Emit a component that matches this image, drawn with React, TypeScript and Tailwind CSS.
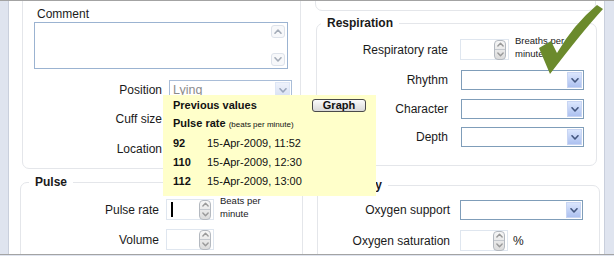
import React from "react";

function Chevron({ up, className }: { up?: boolean; className?: string }) {
  return (
    <svg width="8" height="5" viewBox="0 0 8 5" className={className}>
      <polyline
        points={up ? "1,4.2 4,1 7,4.2" : "1,0.8 4,4 7,0.8"}
        fill="none"
        stroke="currentColor"
        strokeWidth="1.6"
        strokeLinecap="round"
        strokeLinejoin="round"
      />
    </svg>
  );
}

function Select({ value, muted }: { value?: string; muted?: boolean }) {
  return (
    <div
      className={`flex h-[20px] w-[123px] items-center border bg-white ${
        muted ? "border-[#a9bdd8]" : "border-[#7f9db9]"
      }`}
    >
      <span className="flex-1 pl-[3px] text-[12.5px] leading-[18px] text-[#8c8c8c]">
        {value}
      </span>
      <span
        className={`mr-px flex h-[16px] w-[15px] items-center justify-center border ${
          muted
            ? "border-[#dde6f6] bg-linear-to-b from-[#eef2fb] to-[#d8e1f4] text-[#9aa6bd]"
            : "border-[#c8d5f3] bg-linear-to-b from-[#dbe6fd] to-[#adc1f0] text-[#44577f]"
        }`}
      >
        <Chevron />
      </span>
    </div>
  );
}

function Spinner() {
  return (
    <div className="flex h-[20px] w-[12px] flex-col overflow-hidden rounded-[4px] border border-[#b4b9c0] bg-linear-to-b from-[#f6f6f6] to-[#dcdcdc] text-[#9a9a9a]">
      <span className="flex flex-1 items-center justify-center border-b border-[#c4c8ce]">
        <Chevron up className="w-[7px]" />
      </span>
      <span className="flex flex-1 items-center justify-center">
        <Chevron className="w-[7px]" />
      </span>
    </div>
  );
}

function NumberBox({ cursor, width = 48 }: { cursor?: boolean; width?: number }) {
  return (
    <div
      className={`flex h-[21px] items-center border border-[#dfe6ef] bg-white pr-[2px] ${
        width === 48 ? "w-[48px]" : "w-[49px]"
      }`}
    >
      <span className="flex-1">
        {cursor && <span className="ml-[4px] block h-[15px] w-[2px] bg-black" />}
      </span>
      <Spinner />
    </div>
  );
}

function Legend({ children, left }: { children: React.ReactNode; left: string }) {
  return (
    <span
      className={`absolute -top-[8px] bg-white px-[6px] text-[12px] font-bold leading-[14px] text-[#1a1a1a] ${left}`}
    >
      {children}
    </span>
  );
}

function Row({
  label,
  labelWidth,
  gap,
  mt,
  children,
}: {
  label: string;
  labelWidth: string;
  gap: string;
  mt: string;
  children: React.ReactNode;
}) {
  return (
    <div className={`flex items-center ${mt}`}>
      <span className={`shrink-0 text-right text-[12px] leading-[14px] ${labelWidth} ${gap}`}>
        {label}
      </span>
      {children}
    </div>
  );
}

function Units({ first, second }: { first: string; second: string }) {
  return (
    <span className="ml-[6px] -mt-[5px] self-start text-[9.5px] leading-[13px] text-[#1a1a1a]">
      {first}
      <br />
      {second}
    </span>
  );
}

export default function App() {
  const history = [
    { value: "92", time: "15-Apr-2009, 11:52" },
    { value: "110", time: "15-Apr-2009, 12:30" },
    { value: "112", time: "15-Apr-2009, 13:00" },
  ];

  return (
    <div className="relative flex h-[256px] w-[614px] flex-col overflow-hidden bg-[#dfe4ef] font-['Liberation_Sans',Arial,sans-serif] text-[#1a1a1a]">
      <div className="h-px bg-[#a3a3a3]" />
      <div className="flex h-[253px]">
        <div className="w-[8px]" />
        <div className="flex w-[597px] overflow-hidden border-x border-[#c9cfdc] bg-white">
          {/* left column */}
          <div className="flex w-[299px] shrink-0 flex-col">
            <div className="-mt-[12px] ml-[13px] h-[180px] w-[279px] shrink-0 rounded-[7px] border border-[#e4e6ea] pt-[17px]">
              <div className="ml-[14px] text-[12px] leading-[14px]">Comment</div>
              <div className="ml-[11px] mt-[1px] flex h-[47px] w-[254px] justify-end border border-[#9bb3d1] bg-white p-[2px]">
                <div className="flex w-[14px] flex-col justify-between text-[#a4acb8]">
                  <span className="flex h-[13px] items-center justify-center rounded-[3px] border border-[#dde2ea] bg-[#f7f8fa]">
                    <Chevron up />
                  </span>
                  <span className="flex h-[13px] items-center justify-center rounded-[3px] border border-[#dde2ea] bg-[#f7f8fa]">
                    <Chevron />
                  </span>
                </div>
              </div>
              <Row label="Position" labelWidth="w-[139px]" gap="mr-[7px]" mt="mt-[11px]">
                <Select value="Lying" muted />
              </Row>
              <Row label="Cuff size" labelWidth="w-[139px]" gap="mr-[7px]" mt="mt-[9px]">
                <Select />
              </Row>
              <Row label="Location" labelWidth="w-[139px]" gap="mr-[7px]" mt="mt-[10px]">
                <Select />
              </Row>
            </div>

            <div className="relative ml-[11px] mt-[13px] h-[90px] w-[283px] shrink-0 rounded-[7px] border border-[#e4e6ea] pt-[16px]">
              <Legend left="left-[8px]">Pulse</Legend>
              <Row label="Pulse rate" labelWidth="w-[138px]" gap="mr-[7px]" mt="">
                <NumberBox cursor />
                <Units first="Beats per" second="minute" />
              </Row>
              <Row label="Volume" labelWidth="w-[138px]" gap="mr-[7px]" mt="mt-[9px]">
                <NumberBox />
              </Row>
            </div>
          </div>

          {/* right column */}
          <div className="flex flex-1 flex-col">
            <div className="-mt-[12px] ml-[7px] h-[22px] w-[281px] shrink-0 rounded-[7px] border border-[#e4e6ea]" />

            <div className="relative ml-[8px] mt-[12px] h-[143px] w-[281px] shrink-0 rounded-[7px] border border-[#e4e6ea] pt-[15px]">
              <Legend left="left-[4px]">Respiration</Legend>
              <Row label="Respiratory rate" labelWidth="w-[131px]" gap="mr-[12px]" mt="">
                <NumberBox width={49} />
                <Units first="Breaths per" second="minute" />
              </Row>
              <Row label="Rhythm" labelWidth="w-[131px]" gap="mr-[13px]" mt="mt-[10px]">
                <Select />
              </Row>
              <Row label="Character" labelWidth="w-[131px]" gap="mr-[13px]" mt="mt-[9px]">
                <Select />
              </Row>
              <Row label="Depth" labelWidth="w-[131px]" gap="mr-[13px]" mt="mt-[8px]">
                <Select />
              </Row>
            </div>

            <div className="relative ml-[9px] mt-[19px] h-[90px] w-[283px] shrink-0 rounded-[7px] border border-[#e4e6ea] pt-[14px]">
              <Legend left="left-[6px]">Oximetry</Legend>
              <Row label="Oxygen support" labelWidth="w-[132px]" gap="mr-[10px]" mt="">
                <Select />
              </Row>
              <Row label="Oxygen saturation" labelWidth="w-[132px]" gap="mr-[10px]" mt="mt-[10px]">
                <NumberBox />
                <span className="ml-[5px] text-[12px] leading-[14px]">%</span>
              </Row>
            </div>
          </div>
        </div>
      </div>
      <div className="h-px bg-[#a3a3a3]" />

      {/* previous values popup */}
      <div className="absolute left-[163px] top-[95px] h-[101px] w-[213px] bg-[#ffffca] pl-[10px] pr-[10px] pt-[4px] text-[11px] leading-[13px] text-[#111]">
        <div className="flex items-center justify-between">
          <span className="font-bold">Previous values</span>
          <span className="flex h-[13px] w-[54px] items-center justify-center rounded-[3px] border border-[#4a4a4a] bg-linear-to-b from-[#fbfbfb] to-[#d9d9d9] font-bold leading-none">
            Graph
          </span>
        </div>
        <div className="mt-[5px]">
          <span className="font-bold">Pulse rate</span>{" "}
          <span className="text-[8px]">(beats per minute)</span>
        </div>
        <div className="mt-[6px] flex flex-col gap-[6px]">
          {history.map((h) => (
            <div key={h.value} className="flex">
              <span className="w-[34px] font-bold">{h.value}</span>
              <span>{h.time}</span>
            </div>
          ))}
        </div>
      </div>

      {/* tick mark */}
      <svg
        className="absolute left-[536px] top-[4px]"
        width="70"
        height="74"
        viewBox="0 0 70 74"
      >
        <path
          d="M3 44 L15 37 L21 49 Q38 20 61 1 L67 5 Q46 28 14 70 Z"
          fill="#6b8a2c"
        />
      </svg>
    </div>
  );
}
